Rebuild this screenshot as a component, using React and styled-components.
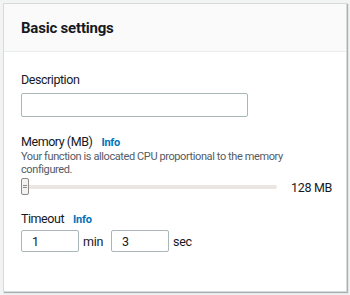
import React from 'react';
import styled, { createGlobalStyle } from 'styled-components';

const GlobalStyle = createGlobalStyle`
  html, body {
    margin: 0;
    padding: 0;
    background: #f2f3f3;
  }
  body {
    font-family: Roboto, "Liberation Sans", Arial, sans-serif;
    color: #16191f;
  }
`;

const Page = styled.div`
  width: 350px;
  height: 295px;
  padding: 3px;
  box-sizing: border-box;
`;

const Card = styled.section`
  width: 344px;
  height: 289px;
  box-sizing: border-box;
  background: #fff;
  border: 1px solid #d5dbdb;
  box-shadow: 1px 1px 1px 0 rgba(0, 28, 36, 0.3);
  display: flex;
  flex-direction: column;
`;

const Header = styled.header`
  background: #fafafa;
  border-bottom: 1px solid #eaeded;
  height: 48px;
  box-sizing: border-box;
  padding: 0 17px;
  display: flex;
  align-items: center;
`;

const Title = styled.h2`
  margin: 0;
  font-size: 15px;
  font-weight: 700;
  letter-spacing: -0.2px;
  color: #16191f;
`;

const Body = styled.div`
  padding: 20px 17px 0;
  display: flex;
  flex-direction: column;
`;

const Field = styled.div`
  display: flex;
  flex-direction: column;
  margin-top: ${p => p.mt || 0}px;
`;

const LabelRow = styled.div`
  display: flex;
  align-items: baseline;
  gap: 9px;
  height: 16px;
  line-height: 16px;
`;

const Label = styled.label`
  font-size: 12.5px;
  letter-spacing: -0.45px;
  color: #16191f;
`;

const Info = styled.a`
  font-size: 11px;
  font-weight: 700;
  letter-spacing: -0.2px;
  color: #0073bb;
  text-decoration: none;
`;

const Hint = styled.p`
  margin: 0;
  font-size: 11px;
  line-height: 13px;
  letter-spacing: -0.4px;
  color: #545b64;
  width: 268px;
`;

const TextInput = styled.input`
  box-sizing: border-box;
  width: ${p => p.w}px;
  height: ${p => p.h}px;
  margin-top: ${p => p.mt || 0}px;
  border: 1px solid #aab7b8;
  border-radius: 2px;
  padding: 0 10px;
  font-family: inherit;
  font-size: 12.5px;
  color: #16191f;
  outline: none;
`;

const SliderRow = styled.div`
  display: flex;
  align-items: center;
  height: 18px;
  margin-top: 2px;
`;

const Track = styled.div`
  position: relative;
  flex: 0 0 256px;
  height: 4px;
  background: #e9e6e3;
  border-radius: 2px;
`;

const Thumb = styled.div`
  position: absolute;
  left: 0;
  top: -7px;
  width: 8px;
  height: 17px;
  box-sizing: border-box;
  background: #f4f3f2;
  border: 1px solid #8d8b88;
  border-radius: 2px;
  display: flex;
  flex-direction: column;
  align-items: center;
  justify-content: center;
  gap: 1px;

  &::before,
  &::after {
    content: '';
    width: 4px;
    height: 1px;
    background: #8d8b88;
  }
`;

const SliderValue = styled.span`
  margin-left: 14px;
  white-space: nowrap;
  font-size: 12.5px;
  letter-spacing: -0.3px;
  color: #16191f;
`;

const TimeRow = styled.div`
  display: flex;
  align-items: center;
  gap: 4px;
  margin-top: 3px;
`;

const Unit = styled.span`
  font-size: 12.5px;
  letter-spacing: -0.3px;
  color: #16191f;
  margin-right: ${p => p.mr || 0}px;
`;

export default function App() {
  return (
    <>
      <GlobalStyle />
      <Page>
        <Card>
          <Header>
            <Title>Basic settings</Title>
          </Header>
          <Body>
            <Field>
              <LabelRow>
                <Label>Description</Label>
              </LabelRow>
              <TextInput w={227} h={24} mt={5} />
            </Field>
            <Field mt={17}>
              <LabelRow>
                <Label>Memory (MB)</Label>
                <Info>Info</Info>
              </LabelRow>
              <Hint>Your function is allocated CPU proportional to the memory configured.</Hint>
              <SliderRow>
                <Track>
                  <Thumb />
                </Track>
                <SliderValue>128 MB</SliderValue>
              </SliderRow>
            </Field>
            <Field mt={15}>
              <LabelRow>
                <Label>Timeout</Label>
                <Info>Info</Info>
              </LabelRow>
              <TimeRow>
                <TextInput w={58} h={22} defaultValue="1" />
                <Unit mr={4}>min</Unit>
                <TextInput w={58} h={22} defaultValue="3" />
                <Unit>sec</Unit>
              </TimeRow>
            </Field>
          </Body>
        </Card>
      </Page>
    </>
  );
}
